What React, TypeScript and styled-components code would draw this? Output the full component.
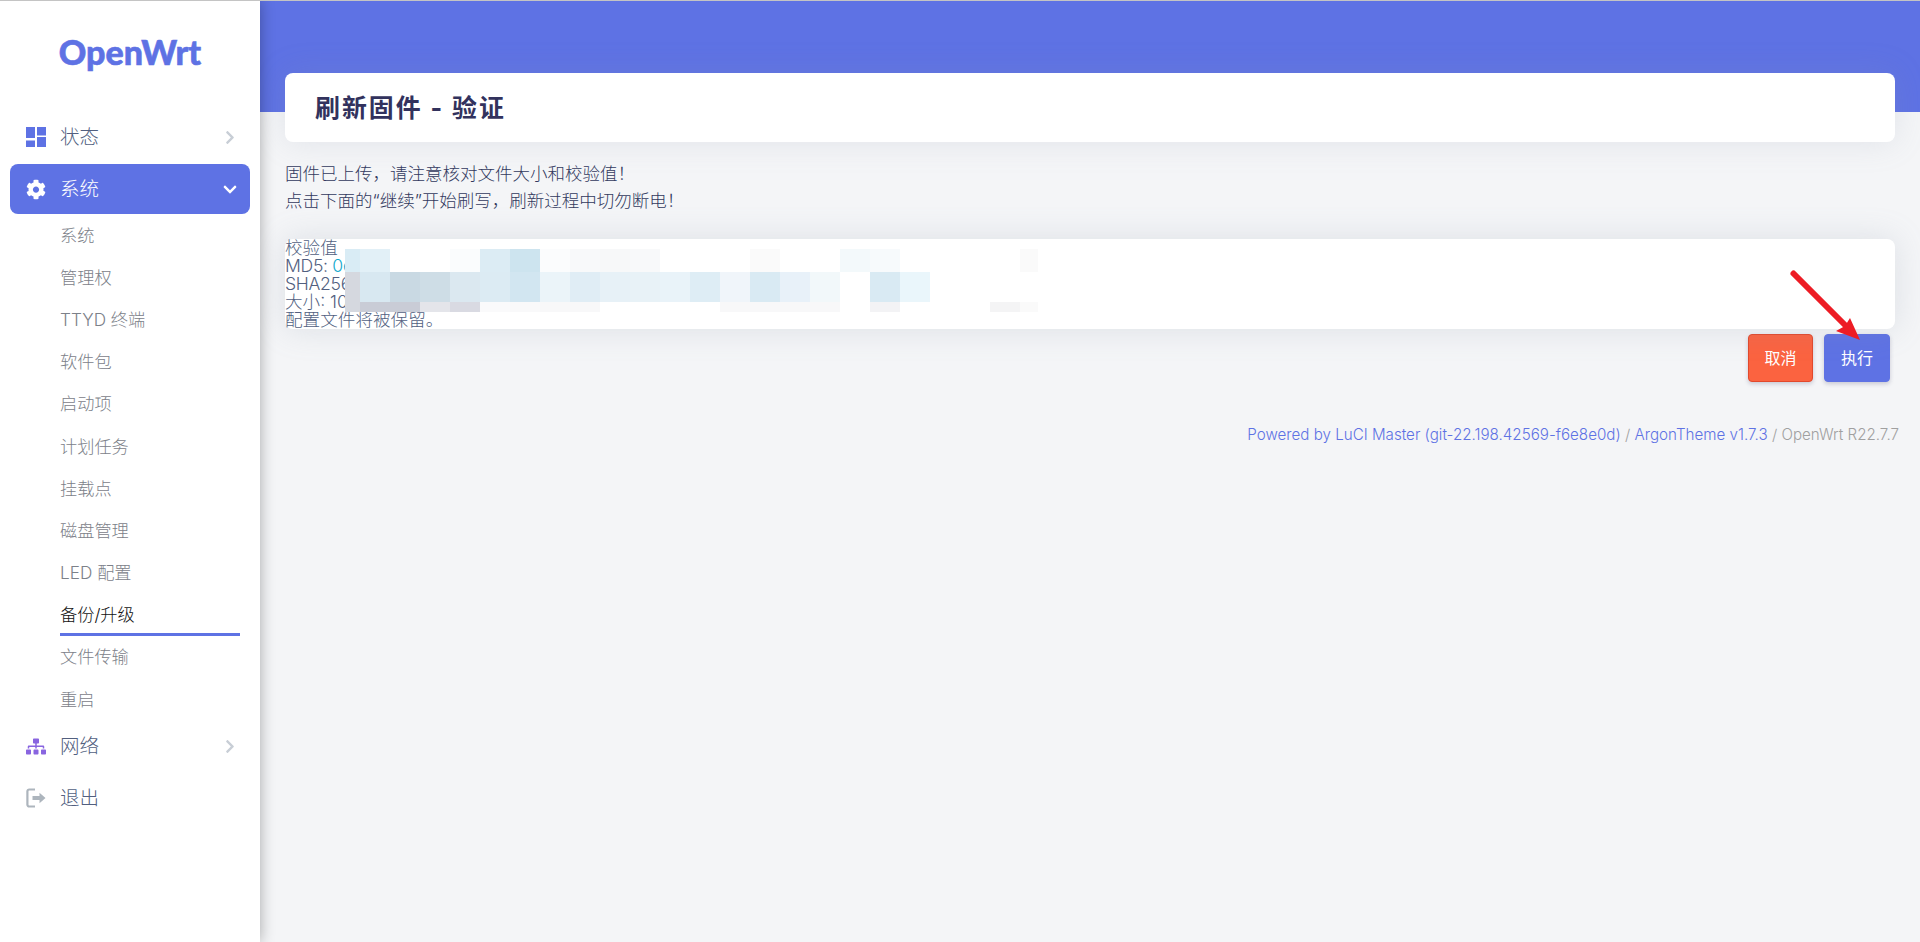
import React from 'react';
import styled, { createGlobalStyle } from 'styled-components';
import { FaChevronDown, FaChevronRight, FaCog, FaSitemap } from 'react-icons/fa';

const COLORS = {
    primary: '#5e72e4',
    page: '#f4f5f7',
    heading: '#32325d',
    body: '#525f7f',
    muted: '#7c8189',
    purple: '#8965e0',
    orange: '#fb6340',
    cyan: '#11a9cd',
};

const FONT = `Inter, "Noto Sans CJK SC", "Noto Sans", sans-serif`;

const GlobalStyle = createGlobalStyle`
    html, body {
        margin: 0;
        height: 100%;
        background: ${COLORS.page};
        font-family: ${FONT};
    }
`;

const Page = styled.div`
    position: relative;
    display: flex;
    height: 942px;
    overflow: hidden;
    border-top: 1px solid #c4c4c4;
    box-sizing: border-box;
`;

const Sidebar = styled.nav`
    width: 260px;
    flex-shrink: 0;
    background: #fff;
    box-shadow: 0 0 14px rgba(0, 0, 0, 0.32);
    z-index: 1;
`;

const Logo = styled.div`
    height: 111px;
    padding-top: 31px;
    box-sizing: border-box;
    text-align: center;
    font-family: Lato, sans-serif;
    font-size: 34px;
    line-height: 40px;
    font-weight: 900;
    -webkit-text-stroke: 0.6px ${COLORS.primary};
    color: ${COLORS.primary};
`;

const TopItem = styled.div<{ $active?: boolean; $flush?: boolean }>`
    display: flex;
    align-items: center;
    height: 50px;
    margin: 0 10px ${p => (p.$flush ? 0 : '2px')};
    padding: 0 13px 0 16px;
    gap: 14px;
    border-radius: 8px;
    font-size: 19.5px;
    font-weight: 300;
    color: ${p => (p.$active ? '#fff' : COLORS.body)};
    background: ${p => (p.$active ? COLORS.primary : 'transparent')};
`;

const TopLabel = styled.span`
    padding-bottom: 3px;
`;

const IconSlot = styled.span<{ $color: string }>`
    display: flex;
    width: 20px;
    height: 22px;
    align-items: center;
    justify-content: center;
    color: ${p => p.$color};
`;

const Chevron = styled.span<{ $color: string }>`
    display: flex;
    margin-left: auto;
    width: 14px;
    justify-content: center;
    color: ${p => p.$color};
`;

const SubList = styled.div`
    display: flex;
    flex-direction: column;
    margin-bottom: 1px;
`;

const SubItem = styled.div<{ $active?: boolean }>`
    display: flex;
    align-items: center;
    box-sizing: border-box;
    height: 42.2px;
    padding-bottom: 2px;
    margin: 0 20px 0 60px;
    font-size: 17.2px;
    font-weight: 300;
    color: ${p => (p.$active ? '#111' : COLORS.muted)};
    box-shadow: ${p => (p.$active ? `inset 0 -3px 0 ${COLORS.primary}` : 'none')};
`;

const Main = styled.main`
    flex: 1;
    background: linear-gradient(${COLORS.primary} 111px, ${COLORS.page} 111px);
`;

const Content = styled.div`
    padding: 72px 25px 0 25px;
`;

const TitleCard = styled.div`
    display: flex;
    align-items: center;
    box-sizing: border-box;
    height: 69px;
    padding: 0 0 4px 30px;
    border-radius: 8px;
    background: #fff;
    box-shadow: 0 0 32px rgba(136, 152, 170, 0.18);
`;

const Title = styled.h2`
    margin: 0;
    font-size: 24.9px;
    font-weight: 700;
    letter-spacing: 2px;
    color: ${COLORS.heading};
`;

const Notice = styled.div`
    margin: 19px 0 25px;
    font-size: 17.5px;
    font-weight: 300;
    line-height: 26.5px;
    color: #32395e;
`;

const Panel = styled.div`
    position: relative;
    border-radius: 8px;
    background: #fff;
    box-shadow: 0 0 32px rgba(136, 152, 170, 0.22);
`;

const InfoLine = styled.div`
    height: 18px;
    font-size: 17.6px;
    font-weight: 300;
    line-height: 18px;
    color: ${COLORS.body};
    white-space: nowrap;
`;

const LatinLine = styled(InfoLine)`
    letter-spacing: -0.3px;
`;

const Digest = styled.span`
    color: ${COLORS.cyan};
`;

/* pixelated block that hides the checksums */
const Mosaic = styled.div`
    position: absolute;
    left: 60px;
    top: 10px;
    display: flex;
    flex-direction: column;
`;

const MosaicRow = styled.div<{ $h: number }>`
    display: flex;
    height: ${p => p.$h}px;
`;

const Tile = styled.div<{ $w: number; $c: string }>`
    width: ${p => p.$w}px;
    background: ${p => p.$c};
`;

const Actions = styled.div`
    display: flex;
    justify-content: flex-end;
    gap: 11px;
    margin-top: 5px;
    padding-right: 5px;
`;

const Button = styled.button<{ $danger?: boolean }>`
    width: ${p => (p.$danger ? 65 : 66)}px;
    height: 48px;
    padding: 0 0 2px;
    border: 1px solid ${p => (p.$danger ? '#e2492c' : COLORS.primary)};
    border-radius: 4px;
    font-family: ${FONT};
    font-size: 16px;
    color: #fff;
    background: ${p => (p.$danger ? COLORS.orange : COLORS.primary)};
    box-shadow: 0 2px 4px rgba(50, 50, 93, 0.22);
`;

const Footer = styled.footer`
    margin-top: 41px;
    padding-right: 21px;
    text-align: right;
    font-size: 15.17px;
    font-weight: 300;
    line-height: 24px;
    color: #a0a0a0;
    white-space: nowrap;
`;

const FooterLink = styled.span`
    color: ${COLORS.primary};
`;

const Arrow = styled.svg`
    position: absolute;
    left: 1785px;
    top: 264px;
    z-index: 2;
`;

const DashboardIcon = () => (
    <svg width="20" height="20" viewBox="0 0 20 20" fill={COLORS.primary}>
        <rect x="0" y="0" width="9" height="11" />
        <rect x="11" y="0" width="9" height="8.5" />
        <rect x="0" y="13.5" width="9" height="6.5" />
        <rect x="11" y="10" width="9" height="10" />
    </svg>
);

const LogoutIcon = () => (
    <svg width="20" height="20" viewBox="0 0 20 20" fill="none" stroke="#adb5bd" strokeWidth="2.2">
        <path d="M9 1.5H3.2a1.8 1.8 0 0 0-1.8 1.8v13.4a1.8 1.8 0 0 0 1.8 1.8H9" />
        <path d="M6.5 8h7V4.8L19.5 10l-6 5.2V12h-7z" fill="#adb5bd" stroke="none" />
    </svg>
);

const SUB_ITEMS = ['系统', '管理权', 'TTYD 终端', '软件包', '启动项', '计划任务', '挂载点', '磁盘管理', 'LED 配置', '备份/升级', '文件传输', '重启'];
const ACTIVE_SUB = '备份/升级';

type TileSpec = [number, string];

const MOSAIC: { h: number; tiles: TileSpec[] }[] = [
    {
        h: 23,
        tiles: [
            [15, '#d9ecf5'], [30, '#e2f0f7'], [60, '#fff'], [30, '#fafcfd'], [30, '#dcecf4'], [30, '#cde4ef'],
            [30, '#fbfcfd'], [30, '#f8f9fa'], [30, '#f7f8f9'], [30, '#f8f9fa'], [90, '#fff'], [30, '#fafafa'],
            [60, '#fff'], [30, '#f3f9fb'], [30, '#f7fafc'], [120, '#fff'], [18, '#fafafa'],
        ],
    },
    {
        h: 30,
        tiles: [
            [15, '#d5d8df'], [30, '#d8e8f1'], [30, '#c9d9e3'], [30, '#cedde6'], [30, '#dbe8f0'], [30, '#dcebf3'],
            [30, '#d2e6f1'], [30, '#ebf4f9'], [30, '#e0edf5'], [30, '#e7f1f7'], [30, '#e8f2f7'], [30, '#e9f3f9'],
            [30, '#deedf5'], [30, '#f0f5fa'], [30, '#d9eaf3'], [30, '#e8f1f9'], [30, '#f2f8fa'], [30, '#fff'],
            [30, '#d9eaf3'], [30, '#eaf6fb'], [108, '#fff'],
        ],
    },
    {
        h: 10,
        tiles: [
            [15, '#d5d8df'], [60, '#c9ccd6'], [30, '#e4e5ea'], [30, '#d9dae2'], [30, '#fafafb'], [30, '#f9f9fa'],
            [60, '#f8f8f9'], [120, '#fff'], [120, '#f8f8f9'], [30, '#fff'], [30, '#f3f3f5'], [90, '#fff'],
            [30, '#f4f4f5'], [18, '#fafafa'],
        ],
    },
];

export default function App() {
    return (
        <Page>
            <GlobalStyle />
            <Sidebar>
                <Logo>OpenWrt</Logo>
                <TopItem>
                    <IconSlot $color={COLORS.primary}><DashboardIcon /></IconSlot>
                    <TopLabel>状态</TopLabel>
                    <Chevron $color="#c8ced6"><FaChevronRight size={15} /></Chevron>
                </TopItem>
                <TopItem $active $flush>
                    <IconSlot $color="#fff"><FaCog size={21} /></IconSlot>
                    <TopLabel>系统</TopLabel>
                    <Chevron $color="#fff"><FaChevronDown size={15} /></Chevron>
                </TopItem>
                <SubList>
                    {SUB_ITEMS.map(item => (
                        <SubItem key={item} $active={item === ACTIVE_SUB}>{item}</SubItem>
                    ))}
                </SubList>
                <TopItem>
                    <IconSlot $color={COLORS.purple}><FaSitemap size={21} /></IconSlot>
                    <TopLabel>网络</TopLabel>
                    <Chevron $color="#c8ced6"><FaChevronRight size={15} /></Chevron>
                </TopItem>
                <TopItem>
                    <IconSlot $color="#adb5bd"><LogoutIcon /></IconSlot>
                    <TopLabel>退出</TopLabel>
                </TopItem>
            </Sidebar>
            <Main>
                <Content>
                    <TitleCard>
                        <Title>刷新固件 - 验证</Title>
                    </TitleCard>
                    <Notice>
                        固件已上传，请注意核对文件大小和校验值！<br />
                        点击下面的“继续”开始刷写，刷新过程中切勿断电！
                    </Notice>
                    <Panel>
                        <InfoLine>校验值</InfoLine>
                        <LatinLine>MD5: <Digest>0e</Digest></LatinLine>
                        <LatinLine>SHA256</LatinLine>
                        <InfoLine>大小: 10</InfoLine>
                        <InfoLine>配置文件将被保留。</InfoLine>
                        <Mosaic>
                            {MOSAIC.map((row, r) => (
                                <MosaicRow key={r} $h={row.h}>
                                    {row.tiles.map(([w, c], i) => <Tile key={i} $w={w} $c={c} />)}
                                </MosaicRow>
                            ))}
                        </Mosaic>
                    </Panel>
                    <Actions>
                        <Button $danger>取消</Button>
                        <Button>执行</Button>
                    </Actions>
                </Content>
                <Footer>
                    <FooterLink>Powered by LuCI Master (git-22.198.42569-f6e8e0d)</FooterLink>
                    {' / '}
                    <FooterLink>ArgonTheme v1.7.3</FooterLink>
                    {' / OpenWrt R22.7.7'}
                </Footer>
            </Main>
            <Arrow width="84" height="84" viewBox="0 0 84 84">
                <path d="M8.5 8.5L64 64" stroke="#ed1c24" strokeWidth="6" strokeLinecap="round" />
                <path d="M75 75L51 66L60 61L65 53z" fill="#ed1c24" />
            </Arrow>
        </Page>
    );
}
